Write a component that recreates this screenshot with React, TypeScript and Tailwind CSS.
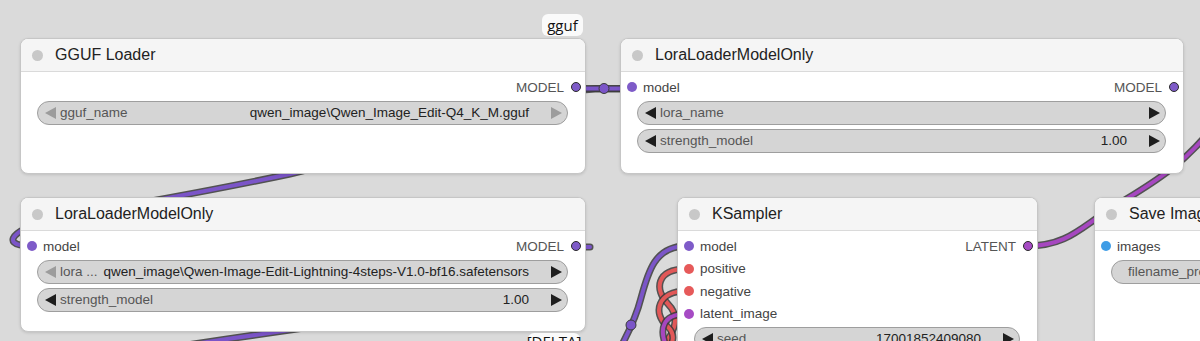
import React from "react";

type Kind = "model" | "cond" | "latent" | "image";

const dotFill: Record<Kind, string> = {
  model: "bg-[#7e5bc8]",
  cond: "bg-[#e65a5a]",
  latent: "bg-[#a64bc4]",
  image: "bg-[#3f9de6]",
};

function Arrow({ dir, dim }: { dir: "l" | "r"; dim?: boolean }) {
  return (
    <svg width="11" height="12" viewBox="0 0 11 12" className="shrink-0">
      <polygon
        points={dir === "l" ? "11,0 11,12 0,6" : "0,0 0,12 11,6"}
        fill={dim ? "#9c9c9c" : "#1e1e1e"}
      />
    </svg>
  );
}

function Node({
  className,
  title,
  children,
}: {
  className: string;
  title: string;
  children: React.ReactNode;
}) {
  return (
    <div
      className={
        "absolute flex flex-col overflow-hidden rounded-[8px] border border-[#c6c6c6] bg-white shadow-[0_1px_3px_rgba(0,0,0,0.12)] " +
        className
      }
    >
      <div className="flex h-[33px] shrink-0 items-center gap-[12px] border-b border-[#dadada] bg-[#f5f5f5] pl-[11px]">
        <span className="h-[11px] w-[11px] shrink-0 rounded-full bg-[#c8c8c8]" />
        <span className="whitespace-nowrap text-[16px] leading-none text-[#222]">{title}</span>
      </div>
      <div className="flex flex-col pt-[4px]">{children}</div>
    </div>
  );
}

function Row({ input, output }: { input?: [string, Kind]; output?: [string, Kind] }) {
  return (
    <div className="flex h-[22.5px] items-center justify-between text-[13.5px] leading-none">
      {input ? (
        <div className="flex items-center gap-[6px] pl-[6px] text-[#444]">
          <span className={"h-[10px] w-[10px] rounded-full " + dotFill[input[1]]} />
          <span>{input[0]}</span>
        </div>
      ) : (
        <span />
      )}
      {output && (
        <div className="flex items-center gap-[7px] pr-[4px] text-[#555]">
          <span>{output[0]}</span>
          <span
            className={"h-[10px] w-[10px] rounded-full border border-[#2a2a2a] " + dotFill[output[1]]}
          />
        </div>
      )}
    </div>
  );
}

function Widget({
  label,
  value,
  dimLeft,
  dimRight,
  noArrows,
  className = "",
}: {
  label: string;
  value?: string;
  dimLeft?: boolean;
  dimRight?: boolean;
  noArrows?: boolean;
  className?: string;
}) {
  return (
    <div
      className={
        "ml-[16px] mr-[17px] flex h-[24px] shrink-0 items-center rounded-full border border-[#9e9e9e] bg-[#d5d5d5] pl-[7px] pr-[5px] text-[13.5px] leading-none " +
        className
      }
    >
      {!noArrows && <Arrow dir="l" dim={dimLeft} />}
      <span className={"flex-1 whitespace-nowrap text-[#555] " + (noArrows ? "pl-[9px]" : "ml-[4px]")}>
        {label}
      </span>
      {value && <span className="whitespace-nowrap text-[#222]">{value}</span>}
      {!noArrows && (
        <span className="ml-[22px] flex">
          <Arrow dir="r" dim={dimRight} />
        </span>
      )}
    </div>
  );
}

function Link({ d, color }: { d: string; color: string }) {
  return (
    <g fill="none" strokeLinecap="round">
      <path d={d} stroke="#3a3a3a" strokeWidth="7" strokeOpacity="0.85" />
      <path d={d} stroke={color} strokeWidth="4" />
    </g>
  );
}

function Marker({ x, y, color }: { x: number; y: number; color: string }) {
  return <circle cx={x} cy={y} r="5" fill={color} stroke="#3a3a3a" strokeWidth="1" />;
}

export default function App() {
  const purple = "#7b55c8";
  const red = "#e25858";
  const magenta = "#a647c0";
  return (
    <div className="relative h-[341px] w-[1200px] overflow-hidden bg-[#dadada] font-['Liberation_Sans',Arial,sans-serif]">
      {/* links sit under the nodes */}
      <svg className="absolute inset-0" width="1200" height="341">
        <Link
          d="M650,89 L595,89 C480,95 400,150 290,174 C200,193 130,205 70,215 C20,223 -8,246 32,246"
          color={purple}
        />
        <Link d="M578,88.5 L632,88.5" color={purple} />
        <Marker x={604} y={88.5} color={purple} />
        <Link d="M140,352 C220,340 300,328 420,312" color={purple} />
        <Link d="M578,247 L590,247" color={purple} />
        <Link d="M686,246 C655,246 648,272 641,298 C636,318 628,334 618,352" color={purple} />
        <Marker x={631} y={325} color={purple} />
        <Link d="M686,269 C656,269 654,290 668,304 C682,318 674,336 656,352" color={red} />
        <Link d="M686,291 C658,291 652,313 667,326 C678,336 672,346 662,356" color={red} />
        <Link d="M686,314 C662,314 658,330 668,350" color={magenta} />
        <Link d="M1027,246 C1068,246 1082,226 1112,208 C1140,190 1180,170 1212,128" color={magenta} />
      </svg>

      <div className="absolute left-[542px] top-[14px] flex h-[22px] w-[41px] items-center justify-center rounded-[6px] bg-[#fafafa] font-['Open_Sans',sans-serif] text-[15px] leading-none text-[#111]">
        gguf
      </div>

      <Node className="left-[20px] top-[38px] h-[136px] w-[566px]" title="GGUF Loader">
        <Row output={["MODEL", "model"]} />
        <Widget
          className="mt-[2px]"
          label="gguf_name"
          value="qwen_image\Qwen_Image_Edit-Q4_K_M.gguf"
          dimLeft
          dimRight
        />
      </Node>

      <Node className="left-[620px] top-[38px] h-[136px] w-[564px]" title="LoraLoaderModelOnly">
        <Row input={["model", "model"]} output={["MODEL", "model"]} />
        <Widget className="mt-[2px]" label="lora_name" />
        <Widget className="mt-[4px]" label="strength_model" value="1.00" />
      </Node>

      <Node className="left-[20px] top-[197px] h-[135px] w-[566px]" title="LoraLoaderModelOnly">
        <Row input={["model", "model"]} output={["MODEL", "model"]} />
        <Widget
          className="mt-[2px]"
          label="lora ..."
          value="qwen_image\Qwen-Image-Edit-Lightning-4steps-V1.0-bf16.safetensors"
          dimLeft
        />
        <Widget className="mt-[4px]" label="strength_model" value="1.00" />
      </Node>

      <div className="absolute left-[528px] top-[333px] flex h-[22px] w-[52px] items-start justify-center rounded-[6px] bg-[#fafafa] pt-[1px] font-['Open_Sans',sans-serif] text-[15px] leading-none text-[#111]">
        [DELTA]
      </div>

      <Node className="left-[677px] top-[197px] h-[200px] w-[361px]" title="KSampler">
        <Row input={["model", "model"]} output={["LATENT", "latent"]} />
        <Row input={["positive", "cond"]} />
        <Row input={["negative", "cond"]} />
        <Row input={["latent_image", "latent"]} />
        <Widget className="mt-[2px]" label="seed" value="17001852409080" />
      </Node>

      <Node className="left-[1094px] top-[197px] h-[200px] w-[200px]" title="Save Image">
        <Row input={["images", "image"]} />
        <Widget className="mt-[2px]" label="filename_prefix" noArrows />
      </Node>
    </div>
  );
}
